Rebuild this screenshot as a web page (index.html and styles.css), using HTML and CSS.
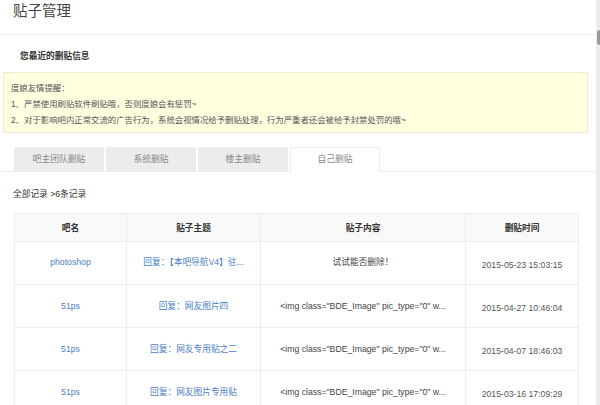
FILE: index.html
```html
<!DOCTYPE html>
<html lang="zh-CN">
<head>
<meta charset="utf-8">
<title>贴子管理</title>
<link rel="stylesheet" href="styles.css">
</head>
<body>
<div class="page">
  <main class="main">
    <header class="title-bar"><h1>贴子管理</h1></header>
    <section class="recent">
      <h2>您最近的删贴信息</h2>
      <div class="notice">
        <p>度娘友情提醒：</p>
        <p>1、严禁使用刷贴软件刷贴哦，否则度娘会有惩罚~</p>
        <p>2、对于影响吧内正常交流的广告行为，系统会视情况给予删贴处理，行为严重者还会被给予封禁处罚的哦~</p>
      </div>
    </section>
    <nav class="tabs">
      <a class="tab">吧主团队删贴</a>
      <a class="tab">系统删贴</a>
      <a class="tab">楼主删贴</a>
      <a class="tab active">自己删贴</a>
    </nav>
    <div class="summary">全部记录 &gt;6条记录</div>
    <table class="records">
      <colgroup>
        <col class="c-bar"><col class="c-topic"><col class="c-content"><col class="c-time">
      </colgroup>
      <thead>
        <tr><th>吧名</th><th>贴子主题</th><th>贴子内容</th><th>删贴时间</th></tr>
      </thead>
      <tbody>
        <tr>
          <td class="raise"><a class="link">photoshop</a></td>
          <td class="raise"><a class="link">回复：【本吧导航V4】驻...</a></td>
          <td class="content raise">试试能否删除！</td>
          <td class="time">2015-05-23 15:03:15</td>
        </tr>
        <tr>
          <td><a class="link">51ps</a></td>
          <td><a class="link">回复：网友图片四</a></td>
          <td class="content">&lt;img class="BDE_Image" pic_type="0" w...</td>
          <td class="time">2015-04-27 10:46:04</td>
        </tr>
        <tr>
          <td><a class="link">51ps</a></td>
          <td><a class="link">回复：网友专用贴之二</a></td>
          <td class="content">&lt;img class="BDE_Image" pic_type="0" w...</td>
          <td class="time">2015-04-07 18:46:03</td>
        </tr>
        <tr>
          <td><a class="link">51ps</a></td>
          <td><a class="link">回复：网友图片专用贴</a></td>
          <td class="content">&lt;img class="BDE_Image" pic_type="0" w...</td>
          <td class="time">2015-03-16 17:09:29</td>
        </tr>
      </tbody>
    </table>
  </main>
  <div class="scrollbar"><div class="thumb"></div></div>
</div>
</body>
</html>
```

FILE: styles.css
```css
html, body {
  margin: 0;
  padding: 0;
  background: #fff;
}
body {
  font-family: "Liberation Sans", "Noto Sans CJK SC", sans-serif;
  font-size: 8.7px;
  color: #333;
}
.page {
  display: flex;
  width: 600px;
  height: 405px;
  overflow: hidden;
}
.main {
  width: 596px;
  flex: none;
}
.title-bar {
  height: 34px;
  border-bottom: 1px solid #ececec;
  padding-left: 13px;
  box-sizing: content-box;
}
.title-bar h1 {
  margin: 0;
  font-size: 14.5px;
  font-weight: normal;
  line-height: 23px;
  color: #444;
}
.recent {
  padding-top: 15px;
}
.recent h2 {
  margin: 0 0 0 20px;
  font-size: 8.7px;
  line-height: 12px;
  font-weight: bold;
  color: #333;
}
.notice {
  margin: 10px 0 0 3px;
  width: 585px;
  box-sizing: border-box;
  height: 61px;
  border: 1px solid #ecebd6;
  background: #ffffe0;
  padding: 7px 7px 0;
}
.notice p {
  margin: 0;
  font-size: 8.4px;
  line-height: 16px;
  color: #555;
  white-space: nowrap;
}
.tabs {
  display: flex;
  gap: 2px;
  margin-top: 14px;
  padding-left: 14px;
  height: 24px;
  border-bottom: 1px solid #ececec;
}
.tab {
  width: 90px;
  height: 24px;
  box-sizing: border-box;
  background: #ececec;
  color: #888;
  font-size: 8.8px;
  line-height: 24px;
  text-align: center;
  border-radius: 2px 2px 0 0;
}
.tab.active {
  background: #fff;
  border: 1px solid #ececec;
  border-bottom: none;
  height: 25px;
  line-height: 23px;
}
.summary {
  margin-top: 16px;
  padding-left: 13px;
  line-height: 12px;
  font-size: 8.7px;
  color: #333;
}
.records {
  margin: 13px 0 0 14px;
  width: 564px;
  border-collapse: collapse;
  table-layout: fixed;
}
.c-bar { width: 112px; }
.c-topic { width: 134px; }
.c-content { width: 205px; }
.c-time { width: 113px; }
.records thead tr {
  height: 28px;
}
.records tbody tr {
  height: 43px;
}
.records th,
.records td {
  border: 1px solid #ededed;
  text-align: center;
  vertical-align: middle;
  padding: 0;
  font-size: 8.7px;
  line-height: 12px;
  white-space: nowrap;
  overflow: hidden;
}
.records th {
  background: #f9f9f9;
  font-weight: bold;
  color: #333;
}
.records td.raise {
  padding-bottom: 2px;
}
.link {
  color: #4a80c8;
}
.content {
  color: #444;
}
.records td.time {
  color: #555;
  padding-top: 3px;
}
.scrollbar {
  width: 4px;
  flex: none;
  background: #ebebeb;
  padding-top: 30px;
  box-sizing: border-box;
}
.thumb {
  margin-left: 1px;
  width: 3px;
  height: 15px;
  background: #9a9a9a;
  border-radius: 3px 0 0 3px;
}
```
